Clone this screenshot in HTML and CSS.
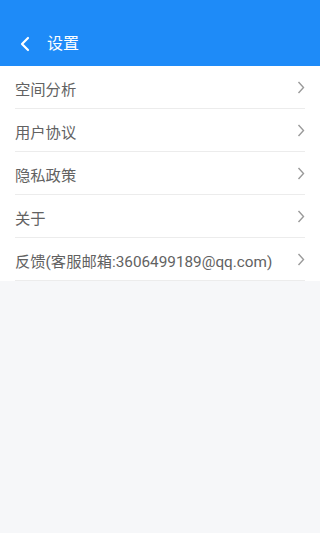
FILE: index.html
```html
<!DOCTYPE html>
<html lang="zh">
<head>
<meta charset="utf-8">
<link rel="stylesheet" href="styles.css">
</head>
<body>
<div class="header">
  <svg class="back" width="12" height="16" viewBox="0 0 12 16"><path d="M9 2 L3 8 L9 14" fill="none" stroke="#fff" stroke-width="2.2" stroke-linecap="round" stroke-linejoin="round"/></svg>
  <span class="title">设置</span>
</div>
<div class="list">
  <div class="row"><span>空间分析</span><svg class="chev" width="8" height="13" viewBox="0 0 8 13"><path d="M1.5 1 L6.5 6.5 L1.5 12" fill="none" stroke="#9a9a9a" stroke-width="1.4"/></svg></div>
  <div class="row"><span>用户协议</span><svg class="chev" width="8" height="13" viewBox="0 0 8 13"><path d="M1.5 1 L6.5 6.5 L1.5 12" fill="none" stroke="#9a9a9a" stroke-width="1.4"/></svg></div>
  <div class="row"><span>隐私政策</span><svg class="chev" width="8" height="13" viewBox="0 0 8 13"><path d="M1.5 1 L6.5 6.5 L1.5 12" fill="none" stroke="#9a9a9a" stroke-width="1.4"/></svg></div>
  <div class="row"><span>关于</span><svg class="chev" width="8" height="13" viewBox="0 0 8 13"><path d="M1.5 1 L6.5 6.5 L1.5 12" fill="none" stroke="#9a9a9a" stroke-width="1.4"/></svg></div>
  <div class="row"><span>反馈(客服邮箱:3606499189@qq.com)</span><svg class="chev" width="8" height="13" viewBox="0 0 8 13"><path d="M1.5 1 L6.5 6.5 L1.5 12" fill="none" stroke="#9a9a9a" stroke-width="1.4"/></svg></div>
</div>
</body>
</html>
```
FILE: styles.css
```css
html, body {
  margin: 0;
  padding: 0;
  background: #f6f7f9;
  font-family: Roboto, "Noto Sans CJK SC", sans-serif;
}
.header {
  height: 66px;
  background: #1e8bf8;
  display: flex;
  align-items: center;
  padding: 22px 0 0 19px;
  box-sizing: border-box;
}
.back {
  display: block;
}
.title {
  color: #fff;
  font-size: 16px;
  margin-left: 16px;
  line-height: 1;
}
.list {
  background: #fff;
}
.row {
  height: 43px;
  margin: 0 15px;
  padding-top: 1px;
  border-bottom: 1px solid #ececec;
  box-sizing: border-box;
  display: flex;
  align-items: center;
  justify-content: space-between;
  font-size: 15.3px;
  color: #626262;
}
.chev {
  display: block;
  margin-right: 0;
}
```
